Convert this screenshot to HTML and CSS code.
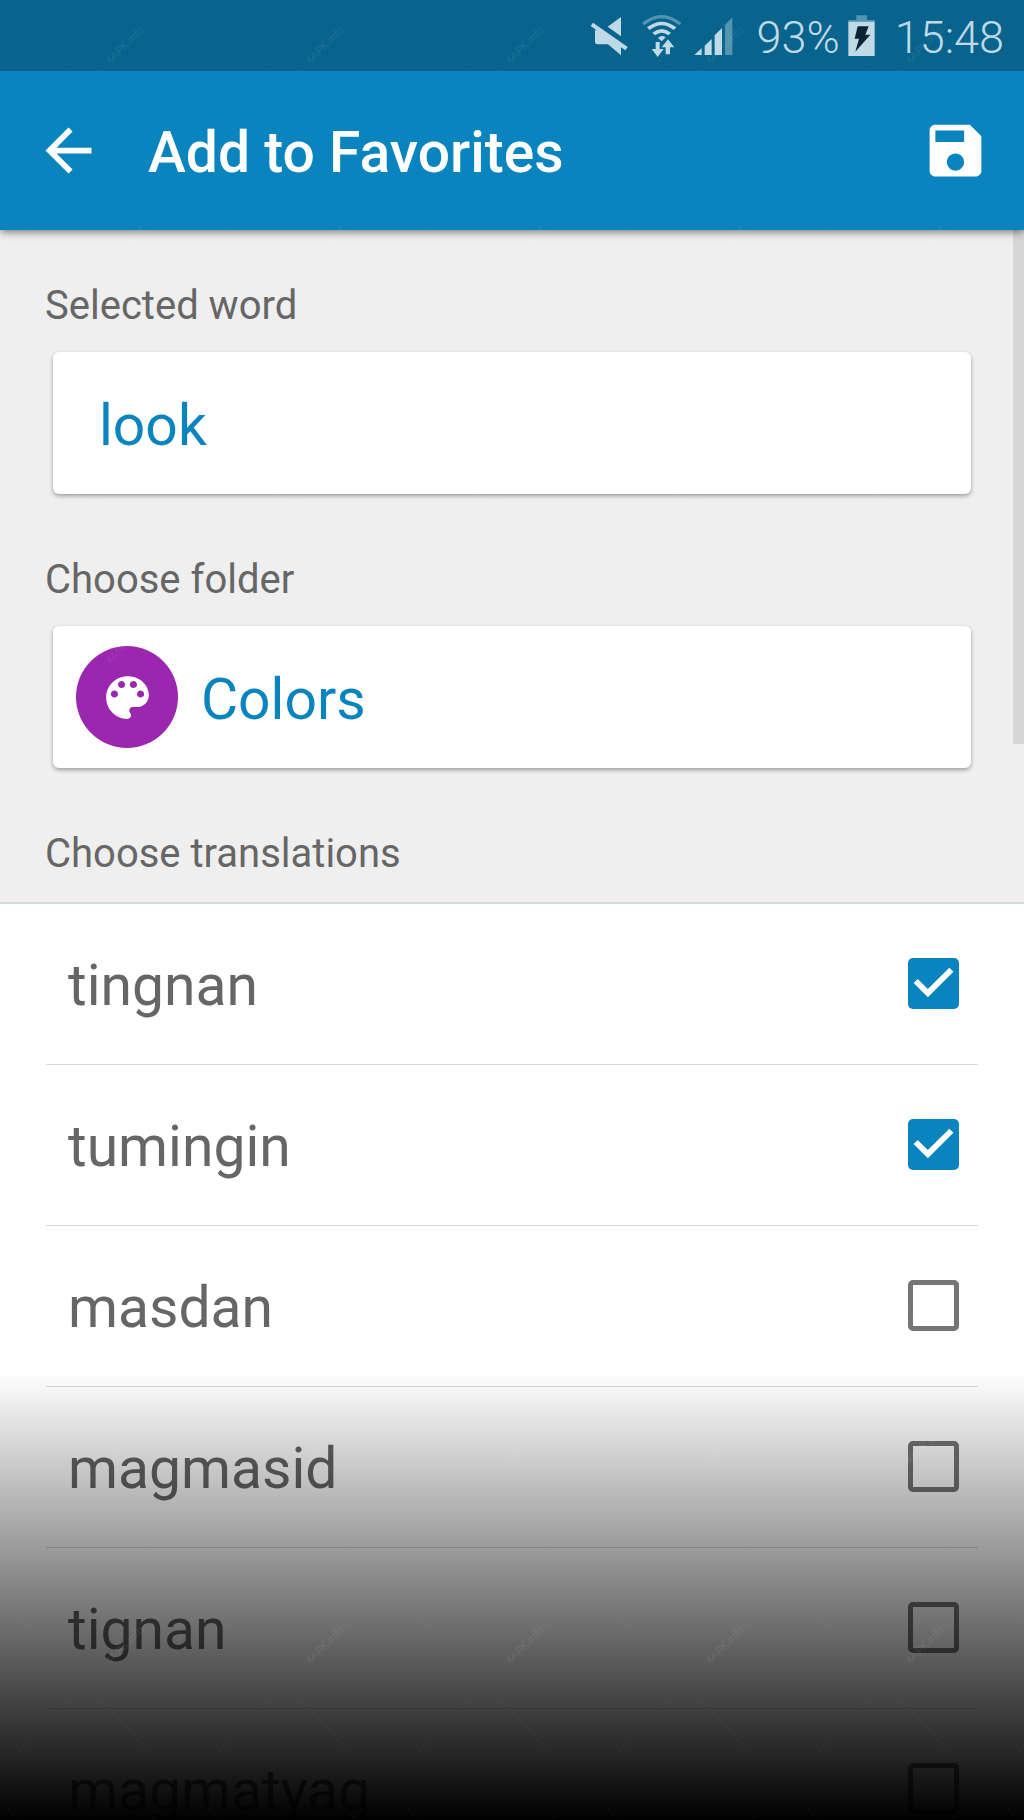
FILE: index.html
```html
<!DOCTYPE html>
<html lang="en">
<head>
  <meta charset="UTF-8">
  <meta name="viewport" content="width=device-width, initial-scale=1.0">
  <title>Add to Favorites</title>
  <link rel="stylesheet" href="styles.css">
</head>
<body>
  <div class="status-bar">
    <svg class="status-icon" width="39" height="42" viewBox="54 45 117 126" aria-hidden="true">
      <path d="M147 51V109L107 80ZM69 90L88 92 147 132V166L108 133H76Q69 133 69 126Z"/>
      <path d="M63 68L167 141 160 151 56 78Z"/>
    </svg>
    <svg class="status-icon" width="41" height="42" viewBox="219 45 123 126" aria-hidden="true">
      <path class="dim" d="M222 69Q281 21 340 69L333 76Q281 34 229 76Z"/>
      <path d="M237 82Q281 48 325 82L317 90Q281 62 245 90Z"/>
      <path d="M253 98Q281 76 309 98L301 106Q281 90 261 106Z"/>
      <path d="M270 114Q281 103 293 112L281 124Z"/>
      <path d="M263 126H275V147H287L269 171 251 147H263Z"/>
      <path d="M300 118L319 142H306V163H293V142H281Z"/>
    </svg>
    <svg class="status-icon" width="39" height="42" viewBox="372 45 117 126" aria-hidden="true">
      <path d="M373 165L395 145V165ZM404 137L425 117V165H404ZM434 106L456 84V165H434Z"/>
      <path class="dim" d="M465 75L487 52V165H465Z"/>
    </svg>
    <span class="battery-level">93%</span>
    <svg class="status-icon" width="27" height="42" viewBox="837 45 81 126" aria-hidden="true">
      <path class="dim" d="M862 46H894V60H917V65H838V60H862Z"/>
      <path d="M838 65H917V168H838Z"/>
      <path class="bolt" d="M866 79H899L889 104H904L859 155 870 116H857Z"/>
    </svg>
    <span class="clock">15:48</span>
  </div>

  <header class="app-bar">
    <button class="icon-btn" type="button" aria-label="Back">
      <svg viewBox="0 0 24 24"><path d="M20 11H7.83l5.59-5.59L12 4l-8 8 8 8 1.41-1.41L7.83 13H20v-2z"/></svg>
    </button>
    <h1 class="title">Add to Favorites</h1>
    <button class="icon-btn" type="button" aria-label="Save">
      <svg viewBox="0 0 24 24"><path d="M17 3H5c-1.11 0-2 .9-2 2v14c0 1.1.89 2 2 2h14c1.1 0 2-.9 2-2V7l-4-4zm-5 16c-1.66 0-3-1.34-3-3s1.34-3 3-3 3 1.34 3 3-1.34 3-3 3zm3-10H5V5h10v4z"/></svg>
    </button>
  </header>

  <main class="content">
    <section class="form">
      <label class="label" for="word">Selected word</label>
      <input class="card word" id="word" type="text" value="look">

      <h2 class="label" id="folder-label">Choose folder</h2>
      <button class="card folder" type="button" aria-describedby="folder-label">
        <span class="folder-icon">
          <svg viewBox="0 0 24 24"><path d="M12 3c-4.97 0-9 4.03-9 9s4.03 9 9 9c.83 0 1.5-.67 1.5-1.5 0-.39-.15-.74-.39-1.01-.23-.26-.38-.61-.38-.99 0-.83.67-1.5 1.5-1.5H16c2.76 0 5-2.24 5-5 0-4.42-4.03-8-9-8zm-5.5 9c-.83 0-1.5-.67-1.5-1.5S5.67 9 6.5 9 8 9.67 8 10.5 7.33 12 6.5 12zm3-4C8.67 8 8 7.33 8 6.5S8.67 5 9.5 5s1.5.67 1.5 1.5S10.33 8 9.5 8zm5 0c-.83 0-1.5-.67-1.5-1.5S13.67 5 14.5 5s1.5.67 1.5 1.5S15.33 8 14.5 8zm3 4c-.83 0-1.5-.67-1.5-1.5S16.67 9 17.5 9s1.5.67 1.5 1.5-.67 1.5-1.5 1.5z"/></svg>
        </span>
        <span class="folder-name">Colors</span>
      </button>

      <h2 class="label">Choose translations</h2>
    </section>

    <ul class="translations">
      <li><label class="row"><span class="name">tingnan</span> <input class="check" type="checkbox" checked></label></li>
      <li><label class="row"><span class="name">tumingin</span> <input class="check" type="checkbox" checked></label></li>
      <li><label class="row"><span class="name">masdan</span> <input class="check" type="checkbox"></label></li>
      <li><label class="row"><span class="name">magmasid</span> <input class="check" type="checkbox"></label></li>
      <li><label class="row"><span class="name">tignan</span> <input class="check" type="checkbox"></label></li>
      <li><label class="row"><span class="name">magmatyag</span> <input class="check" type="checkbox"></label></li>
    </ul>

    <div class="scroll-thumb"></div>
  </main>

  <div class="fade"></div>

  <svg class="watermark" width="100%" height="100%" aria-hidden="true">
    <defs>
      <pattern id="mark" width="200" height="200" patternUnits="userSpaceOnUse">
        <path d="M4 5L77 78M91 92L164 165M6 164L106 64M144 26L162 8"/>
        <text transform="translate(110 65) rotate(-45)">4APK.info</text>
      </pattern>
    </defs>
    <rect width="100%" height="100%" fill="url(#mark)"/>
  </svg>
</body>
</html>
```

FILE: styles.css
```css
* {
  box-sizing: border-box;
}

body {
  margin: 0;
  height: 100vh;
  overflow: hidden;
  display: flex;
  flex-direction: column;
  background-color: #fff;
  color: #666;
  font-family: Roboto, sans-serif;
}

button, input {
  margin: 0;
  padding: 0;
  border: none;
  font-family: inherit;
}

/* Status bar */
.status-bar {
  flex: none;
  display: flex;
  justify-content: flex-end;
  align-items: center;
  height: 71px;
  padding-right: 20px;
  background-color: #08638d;
  color: #bfdae6;
  font-size: 45px;
  font-weight: 300;
  z-index: 2;
}

.status-icon {
  fill: #bfdae6;
  margin-right: 12px;
}

.status-icon .dim {
  fill: #5394b1;
}

.status-icon .bolt {
  fill: #0b2433;
}

.battery-level {
  padding: 4px 8px 0 12px;
}

.clock {
  padding: 4px 0 0 8px;
}

/* App bar */
.app-bar {
  flex: none;
  display: flex;
  align-items: center;
  height: 159px;
  padding: 0 34px;
  background-color: #0984bf;
  box-shadow: 0 2px 8px rgba(0, 0, 0, 0.5);
  color: #fff;
  z-index: 1;
}

.title {
  flex: 1;
  margin: 0 0 0 45px;
  padding-top: 4px;
  font-size: 57px;
  font-weight: 500;
}

.icon-btn {
  width: 69px;
  height: 69px;
  background: none;
  cursor: pointer;
}

.icon-btn svg {
  display: block;
  fill: #fff;
}

/* Form */
.content {
  position: relative;
  flex: none;
}

.form {
  padding: 52px 45px 24px;
  background-color: #efefef;
  border-bottom: 2px solid #d5dadd;
}

.label {
  display: block;
  margin: 0;
  font-size: 40px;
  font-weight: 400;
  line-height: 48px;
}

.card {
  display: flex;
  align-items: center;
  width: calc(100% - 16px);
  height: 142px;
  margin: 22px 8px 62px;
  background-color: #fff;
  border-radius: 6px;
  box-shadow: 0 2px 4px rgba(0, 0, 0, 0.35);
  color: #0984bf;
  font-size: 57px;
}

.word {
  padding: 4px 46px 0;
}

.folder {
  gap: 23px;
  padding: 0 23px;
  text-align: left;
  cursor: pointer;
}

.folder-name, .name {
  padding-top: 4px;
}

.folder-icon {
  display: flex;
  justify-content: center;
  align-items: center;
  width: 102px;
  height: 102px;
  border-radius: 50%;
  background-color: #9b26af;
}

.folder-icon svg {
  width: 57px;
  fill: #fff;
}

/* Translations */
.translations {
  list-style: none;
  margin: 0;
  padding: 0 46px;
}

.row {
  display: flex;
  justify-content: space-between;
  align-items: center;
  height: 161px;
  padding: 0 19px 2px 22px;
  border-bottom: 1px solid #d3dade;
  font-size: 57px;
  cursor: pointer;
}

.check {
  appearance: none;
  width: 51px;
  height: 51px;
  border: 5px solid #757575;
  border-radius: 5px;
}

.check:checked {
  border: none;
  background-color: #0984bf;
}

.check:checked::before {
  content: "";
  display: block;
  width: 51px;
  height: 51px;
  background-color: #fff;
  clip-path: polygon(39% 78%, 11% 50%, 19% 42%, 39% 62%, 81% 20%, 89% 28%);
}

.scroll-thumb {
  position: absolute;
  top: 0;
  right: 0;
  width: 11px;
  height: 514px;
  background-color: #d6d6d6;
}

/* Overlays */
.fade {
  position: fixed;
  left: 0;
  right: 0;
  bottom: 0;
  height: 448px;
  background: linear-gradient(transparent, #000);
  pointer-events: none;
  z-index: 2;
}

.watermark {
  position: fixed;
  top: 0;
  left: 0;
  opacity: 0.08;
  pointer-events: none;
  z-index: 3;
}

.watermark path {
  fill: none;
  stroke: #fff;
  stroke-width: 1;
  stroke-dasharray: 2 4;
}

.watermark text {
  fill: #fff;
  font-size: 11px;
}
```
